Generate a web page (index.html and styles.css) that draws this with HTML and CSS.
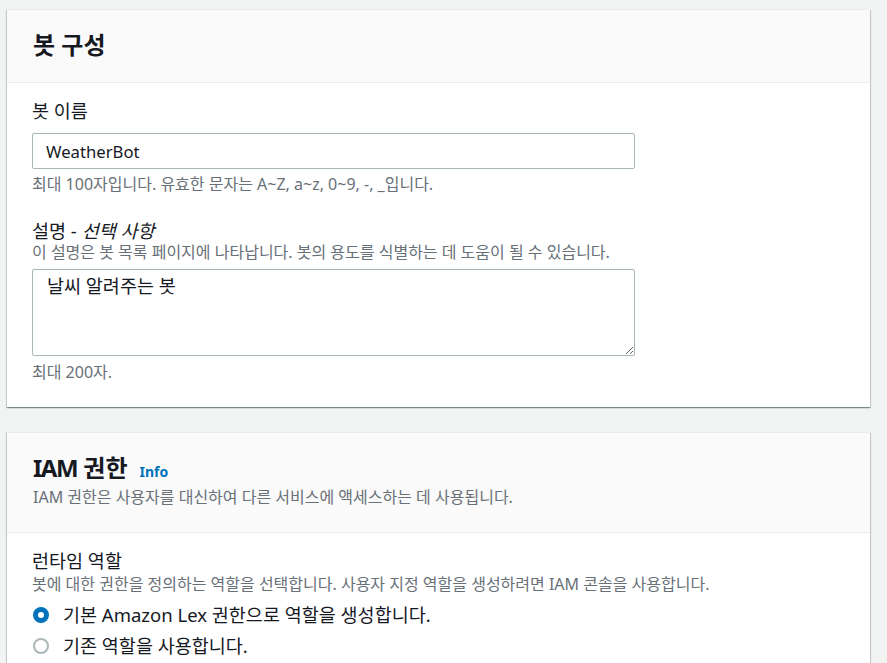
FILE: index.html
```html
<!DOCTYPE html>
<html lang="ko">
<head>
<meta charset="utf-8">
<title>봇 구성</title>
<link rel="stylesheet" href="styles.css">
</head>
<body>
<div class="page">
  <section class="card">
    <header class="card-header">
      <h2 class="card-title">봇 구성</h2>
    </header>
    <div class="card-body">
      <div class="field">
        <label class="field-label" for="botname">봇 이름</label>
        <input class="text-input" id="botname" type="text" value="WeatherBot">
        <div class="hint hint-below">최대 100자입니다. 유효한 문자는 A~Z, a~z, 0~9, -, _입니다.</div>
      </div>
      <div class="field field-gap">
        <label class="field-label" for="botdesc">설명 - <em>선택 사항</em></label>
        <div class="hint">이 설명은 봇 목록 페이지에 나타납니다. 봇의 용도를 식별하는 데 도움이 될 수 있습니다.</div>
        <textarea class="text-area" id="botdesc">날씨 알려주는 봇</textarea>
        <div class="hint hint-below2">최대 200자.</div>
      </div>
    </div>
  </section>

  <section class="card card-second">
    <header class="card-header">
      <h2 class="card-title"><span class="title-latin">IAM</span> 권한<a class="info-link" href="#">Info</a></h2>
      <div class="hint header-desc">IAM 권한은 사용자를 대신하여 다른 서비스에 액세스하는 데 사용됩니다.</div>
    </header>
    <div class="card-body">
      <div class="field">
        <div class="field-label">런타임 역할</div>
        <div class="hint hint-tight">봇에 대한 권한을 정의하는 역할을 선택합니다. 사용자 지정 역할을 생성하려면 IAM 콘솔을 사용합니다.</div>
        <div class="radio-group">
          <label class="radio-row"><span class="radio radio-checked"></span><span class="radio-text">기본 Amazon Lex 권한으로 역할을 생성합니다.</span></label>
          <label class="radio-row"><span class="radio"></span><span class="radio-text">기존 역할을 사용합니다.</span></label>
        </div>
      </div>
    </div>
  </section>
</div>
</body>
</html>
```

FILE: styles.css
```css
* { box-sizing: border-box; }
html, body {
  margin: 0;
  padding: 0;
  background: #f2f3f3;
  font-family: "Noto Sans", "Noto Sans CJK KR", sans-serif;
  color: #16191f;
}
.page {
  padding: 9px 17px 0 7px;
}
.card {
  background: #ffffff;
  border-top: 1px solid #eaeded;
  box-shadow: 0 1px 1px 0 rgba(0, 28, 36, 0.3), 1px 1px 1px 0 rgba(0, 28, 36, 0.15), -1px 1px 1px 0 rgba(0, 28, 36, 0.15);
}
.card-second {
  margin-top: 25px;
}
.card-header {
  background: #fafafa;
  border-bottom: 1px solid #eaeded;
  padding: 20px 25px 22px 26px;
}
.card-second .card-header {
  padding-bottom: 25px;
}
.card-title {
  margin: 0;
  font-size: 24px;
  line-height: 30px;
  height: 30px;
  font-weight: 700;
  font-family: "Noto Sans", "Noto Sans CJK KR", sans-serif;
}
.title-latin {
  letter-spacing: -1.5px;
}
.info-link {
  font-size: 14px;
  line-height: 1;
  font-weight: 700;
  color: #0073bb;
  text-decoration: none;
  margin-left: 12px;
}
.header-desc {
  margin-top: 4px;
}
.card-body {
  padding: 17px 25px 25px 25px;
}
.field {
  display: flex;
  flex-direction: column;
  align-items: flex-start;
}
.field-gap {
  margin-top: 26px;
}
.field-label {
  font-size: 18.5px;
  line-height: 22px;
  color: #16191f;
}
.field-label em {
  font-style: italic;
}
.hint {
  font-size: 16px;
  line-height: 20px;
  color: #687078;
}
.hint-tight {
  margin-top: 2px;
}
.hint-below {
  margin-top: 5px;
}
.hint-below2 {
  margin-top: 6px;
}
.text-input {
  margin-top: 11px;
  width: 603px;
  height: 36px;
  border: 1px solid #aab7b8;
  border-radius: 2px;
  padding: 0 13px;
  font-family: "Noto Sans", "Noto Sans CJK KR", sans-serif;
  font-size: 16.7px;
  color: #16191f;
  background: #fff;
  outline: none;
}
.text-area {
  margin-top: 7px;
  width: 603px;
  height: 87px;
  border: 1px solid #aab7b8;
  border-radius: 2px;
  padding: 4px 14px;
  font-family: "Noto Sans", "Noto Sans CJK KR", sans-serif;
  font-size: 18.5px;
  line-height: 24px;
  color: #16191f;
  background: #fff;
  resize: vertical;
  outline: none;
  display: block;
}
.radio-group {
  margin-top: 5px;
  display: flex;
  flex-direction: column;
}
.radio-row {
  display: flex;
  align-items: center;
  height: 31px;
  cursor: pointer;
}
.radio {
  width: 16px;
  height: 16px;
  border-radius: 50%;
  border: 2px solid #aab7b8;
  background: #fff;
  flex: none;
  margin-left: 1px;
}
.radio-checked {
  border: 5px solid #0073bb;
}
.radio-text {
  margin-left: 14px;
  font-size: 18.5px;
  line-height: 24px;
  color: #16191f;
}
```
